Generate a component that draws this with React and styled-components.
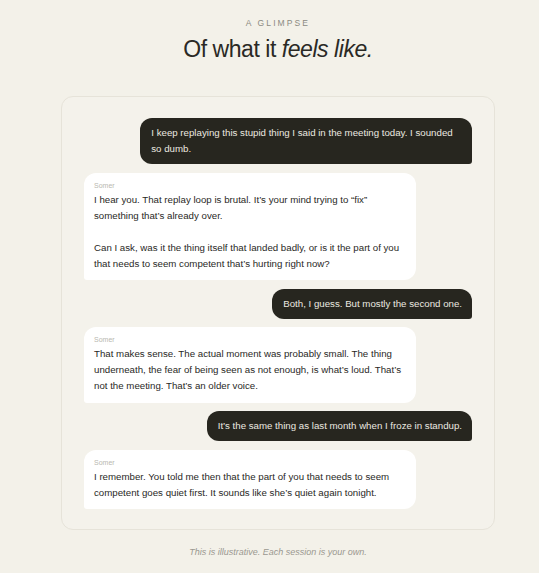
import styled, { createGlobalStyle } from 'styled-components';

const GlobalStyle = createGlobalStyle`
    html, body {
        margin: 0;
        padding: 0;
        background: #f3f1e9;
    }
    body {
        font-family: 'Liberation Sans', Arial, sans-serif;
        -webkit-font-smoothing: antialiased;
    }
`;

const Page = styled.main`
    display: flex;
    flex-direction: column;
    align-items: center;
    padding: 18px 0 0 17px;
    box-sizing: border-box;
    min-height: 573px;
`;

const Eyebrow = styled.div`
    font-size: 8.5px;
    line-height: 10px;
    letter-spacing: 2.1px;
    color: #8b8a82;
    text-transform: uppercase;
`;

const Title = styled.h2`
    margin: 7px 0 0;
    font-size: 23px;
    line-height: 28px;
    font-weight: 400;
    letter-spacing: -0.45px;
    color: #2a2925;

    em {
        font-style: italic;
    }
`;

const Panel = styled.section`
    width: 434px;
    box-sizing: border-box;
    margin-top: 33px;
    padding: 21px 22px 20px;
    display: flex;
    flex-direction: column;
    gap: 8.5px;
    background: #f4f2eb;
    border: 1px solid #e6e3d9;
    border-radius: 12px;
`;

const Bubble = styled.div`
    max-width: 85.5%;
    box-sizing: border-box;
    font-size: 9.7px;
    line-height: 16px;
    align-self: ${p => (p.$mine ? 'flex-end' : 'flex-start')};
    padding: ${p => (p.$mine ? '7px 10px 7px 11px' : '8px 10px 8.5px 10px')};
    background: ${p => (p.$mine ? '#27261f' : '#ffffff')};
    color: ${p => (p.$mine ? '#ece9e0' : '#292825')};
    border-radius: ${p => (p.$mine ? '12px 12px 3px 12px' : '12px 12px 12px 3px')};
`;

const Sender = styled.div`
    font-size: 7px;
    line-height: 10px;
    margin-bottom: 1px;
    color: #b9b8b0;
`;

const Para = styled.p`
    margin: 0;

    & + & {
        margin-top: 16px;
    }
`;

const Note = styled.p`
    margin: 16px 0 0;
    font-size: 9px;
    line-height: 12px;
    font-style: italic;
    color: #9a9890;
`;

const messages = [
    { mine: true, text: ['I keep replaying this stupid thing I said in the meeting today. I sounded so dumb.'] },
    {
        mine: false,
        text: [
            'I hear you. That replay loop is brutal. It\u2019s your mind trying to \u201cfix\u201d something that\u2019s already over.',
            'Can I ask, was it the thing itself that landed badly, or is it the part of you that needs to seem competent that\u2019s hurting right now?',
        ],
    },
    { mine: true, text: ['Both, I guess. But mostly the second one.'] },
    {
        mine: false,
        text: ['That makes sense. The actual moment was probably small. The thing underneath, the fear of being seen as not enough, is what\u2019s loud. That\u2019s not the meeting. That\u2019s an older voice.'],
    },
    { mine: true, text: ['It\u2019s the same thing as last month when I froze in standup.'] },
    {
        mine: false,
        text: ['I remember. You told me then that the part of you that needs to seem competent goes quiet first. It sounds like she\u2019s quiet again tonight.'],
    },
];

function App() {
    return (
        <>
            <GlobalStyle />
            <Page>
                <Eyebrow>A Glimpse</Eyebrow>
                <Title>Of what it <em>feels like.</em></Title>
                <Panel>
                    {messages.map((m, i) => (
                        <Bubble key={i} $mine={m.mine}>
                            {!m.mine && <Sender>Somer</Sender>}
                            {m.text.map((t, j) => (
                                <Para key={j}>{t}</Para>
                            ))}
                        </Bubble>
                    ))}
                </Panel>
                <Note>This is illustrative. Each session is your own.</Note>
            </Page>
        </>
    );
}

export default App;
